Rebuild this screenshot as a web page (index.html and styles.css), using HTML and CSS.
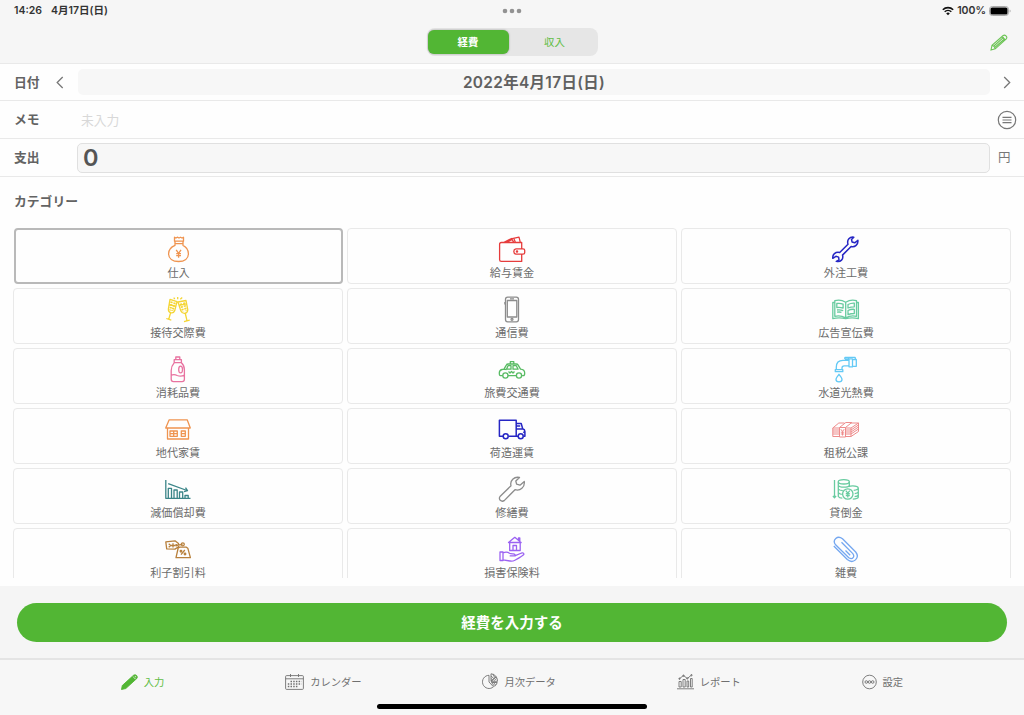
FILE: index.html
```
<!DOCTYPE html>
<html lang="ja">
  <head>
    <meta charset="UTF-8" />
    <title>経費</title>
    <link rel="stylesheet" href="styles.css">
  </head>
  <body>
    <header>
      <div class="status">
        <div class="status_left"><span>14:26</span><span>4月17日(日)</span></div>
        <svg class="dots" width="20" height="6" viewBox="0 0 20 6"><circle cx="3" cy="3" r="2.3"/><circle cx="10" cy="3" r="2.3"/><circle cx="17" cy="3" r="2.3"/></svg>
        <div class="status_right">
          <svg width="12" height="10" viewBox="0 0 12 10"><path d="M.8 3.8a7.4 7.4 0 0 1 10.4 0M2.7 5.8a4.7 4.7 0 0 1 6.6 0" fill="none" stroke="#111" stroke-width="1.6"/><path d="M4.2 7.4a2.6 2.6 0 0 1 3.6 0L6 9.3z" fill="#111"/></svg>
          <span>100%</span>
          <svg width="22" height="10" viewBox="0 0 22 10"><rect x=".5" y=".5" width="19" height="9" rx="2.8" fill="none" stroke="#aaa"/><rect x="1.5" y="1.5" width="17" height="7" rx="1.6"/><path d="M20.6 3.5v3q1-.4 1-1.5t-1-1.5" fill="#aaa"/></svg>
        </div>
      </div>
      <div class="toolbar">
        <div class="segment">
          <div class="seg active">経費</div>
          <div class="seg">収入</div>
        </div>
        <svg class="edit" width="18" height="17" viewBox="0 0 18 17"><path d="M1 16l1-4.700L13.200 1.500q1.300-1 2.800.4 1.500 1.600.3 2.900L5.300 14.800zM2 11.300q2.500.6 3.300 3.500M3.300 12.500L13.800 3.200M4.700 13.500L15 4.500M11.800 2.800l3.300 3.300"/></svg>
      </div>
    </header>

    <div class="row date_row">
      <div class="label">日付</div>
      <svg class="prev" width="8" height="13" viewBox="0 0 8 13"><path d="M6.700 1L1.200 6.500l5.500 5.500"/></svg>
      <div class="date">2022年4月17日(日)</div>
      <svg class="next" width="8" height="13" viewBox="0 0 8 13"><path d="M1.200 1l5.500 5.500L1.200 12"/></svg>
    </div>
    <div class="row memo_row">
      <div class="label">メモ</div>
      <div class="memo">未入力</div>
      <svg class="list" width="20" height="20" viewBox="0 0 20 20"><circle cx="10" cy="10" r="8.700"/><path d="M5.500 7.300h9M5.500 10h9M5.500 12.700h9"/></svg>
    </div>
    <div class="row amount_row">
      <div class="label">支出</div>
      <div class="amount">0</div>
      <div class="yen">円</div>
    </div>

    <main>
      <div class="label title">カテゴリー</div>
      <div class="grid">
        <div class="cell selected">
          <svg class="icon orange" viewBox="0 0 30 30"><path d="M10.500 2.200l1.500.8 1.300-.8 1.700.8 1.500-.8 1.500.8 1.500-.8v4h-9zM10.500 6.200h9M11 8.600h8.200M11 6.200v4.200C7 12 4.600 15.300 4.600 18.800c0 4.800 4 7.700 10 7.700s9.800-3 9.800-7.700c0-3.500-2.200-6.800-5.400-8.400V6.200M12.200 14.800l2.400 3.500 2.400-3.500M14.600 18.300v4.500M12.200 18.700H17M12.200 20.700H17"/></svg>
          <span>仕入</span>
        </div>
        <div class="cell">
          <svg class="icon red" viewBox="0 0 30 30"><path d="M24.700 13.800V7.500H4.300q-1.700 0-1.700 1.700v15.500q0 1.700 1.700 1.700h20.400v-7.300M18.800 13.900H26q1.700 0 1.700 1.300v2.600q0 1.300-1.700 1.300h-7.200q-2-.4-2-2.600t2-2.600M7 7.300l7.500-3.800 2.300 3.800M10 7l4.700-2.300M14 3.800l8-1.600 1.300 5.200M17 4l1.500 3.400"/><circle cx="20" cy="16.500" r=".6"/></svg>
          <span>給与賃金</span>
        </div>
        <div class="cell">
          <svg class="icon navy" viewBox="0 0 30 30"><path d="M22.800 2.200C18.800 1.500 15.600 5 17 9.200L8.700 17.500C4.500 16.500 1.300 19.500 1.800 23.300l3.100-2 2.700.8.400 2.700-2.700 1.500c4.300 1.300 7.500-2.400 6.200-6.200l8.600-8.600c3.800 1.200 7.300-2 6.800-6.200l-3.200 2.500-2.600-.8-.6-2.500z"/></svg>
          <span>外注工費</span>
        </div>

        <div class="cell">
          <svg class="icon yellow" viewBox="0 0 30 30"><path d="M7 4.300l7 2.300-2.300 9.200q-1.200 2.700-3.800 2-2.900-1.100-2.500-4zM7.600 17.800l-1.900 6.600M3.300 23.500l5 1.600M15 7l8-1.500 1.800 9.300q-.1 2.900-2.900 3.600-2.800.3-4-2.300zM22.300 18.500l1.700 7.200M21 26.600l5.700-1.400M6 9.300l6.700 2M16 10.300l7.500-1.500M14.700 4.300V2M11.800 4L10.700 2.700M17.300 4.300l1.900-1.800"/><path stroke-dasharray="1.700 1" stroke-width="2.200" d="M8.700 6.500l-1.500 9M11.700 7.500L9.500 16M17.800 8.500l2.300 8M21 7.500l2 8.500"/></svg>
          <span>接待交際費</span>
        </div>
        <div class="cell">
          <svg class="icon gray" viewBox="0 0 30 30"><rect x="8.500" y="2.200" width="13" height="24.600" rx="2.200"/><rect x="10.300" y="5.500" width="9.500" height="16.500"/><path d="M13 3.900h4M7.900 7v2.500"/><circle cx="15" cy="24.300" r="1"/></svg>
          <span>通信費</span>
        </div>
        <div class="cell">
          <svg class="icon mint" viewBox="0 0 30 30"><path d="M14.700 7.200Q9.500 4 3.800 5.700v15.600q5.500-1.500 10.900 1.500 5.200-3 10.800-1.500V5.700Q20 4 14.700 7.200zM14.700 7.200v16M3.800 7.500h-2v16.200q6-1.600 12.900 0 6.500-1.600 12.700 0V7.500h-2M5.800 8.500q3-.6 6.300.6v4q-3-1.200-6.300-.6zM6 15q3-.5 6.200.6M6 17.200q3-.5 4.500.2M17 9.500q3-1.600 6.300-1.400v3.700q-3.500 0-6.300 1.200zM17 15.500q3-1.500 6.300-1.200v4.200q-3.500 0-6.300 1.200z"/></svg>
          <span>広告宣伝費</span>
        </div>

        <div class="cell">
          <svg class="icon pink" viewBox="0 0 30 30"><path d="M12.800 4.700V2h4v2.700M11.200 7.700v-3h7.200v3zM11.300 7.700Q8.200 11.300 8.200 15.500v8.700q0 2.400 2.300 2.400h8.600q2.300 0 2.300-2.400v-9.500q0-4.200-3-7M8.200 20.200q3-1.300 6 .3 3.500 1.400 7.200-.3"/><ellipse cx="17.600" cy="14.500" rx="1.900" ry="3.400"/></svg>
          <span>消耗品費</span>
        </div>
        <div class="cell">
          <svg class="icon green" viewBox="0 0 30 30"><path d="M5.800 20.700H3.400Q2.300 20.700 2.300 18q0-2.800 2.700-3.500l2-.4 2.300-4Q9.800 9 11.300 9h7.900q1.300 0 2 1.100l2.300 4q4.200.4 4.200 3.900 0 2.700-1.300 2.700h-1.300M11 20.700h8.500M13.300 8.800V6.700h3.500v2.100M7 14.200l2.500.5M11 10.700h3v3.500H9.500zM16 10.700h3.300l1.800 3.500H16zM11.500 16.500l1.500 1.500 1.500-1.500 1.500 1.500 1.500-1.500"/><circle cx="8.400" cy="20.500" r="2.600"/><circle cx="22" cy="20.500" r="2.600"/></svg>
          <span>旅費交通費</span>
        </div>
        <div class="cell">
          <svg class="icon sky" viewBox="0 0 30 30"><path d="M5.300 14.700V12q0-6.700 6.700-6.700h6v5.500h-4.800q-2.200 0-2.200 2.200v1.700M4.300 14.700h7.500v2H4.300zM18 3.800h3.500v8H18zM21.500 4.500h3.800v6.800h-3.800zM13.800 2.300h10.500M13.800 4h4M13.800 2.300V4M24.300 2.300v2.200M17.500 2.300v1.500M8 19.300q-3 3.500-3 5.300 0 2.200 3 2.200t3-2.200q0-1.800-3-5.300z"/></svg>
          <span>水道光熱費</span>
        </div>

        <div class="cell">
          <svg class="icon orange" viewBox="0 0 30 30"><path d="M6.200 4.800h18L27.300 13H2.700zM4.500 13v11h21V13M7 16h7.300v5.300H7zM10.700 16v5.300M7 18.700h7.300M18.300 16h4v5.300h-4zM18.300 18.700h4"/></svg>
          <span>地代家賃</span>
        </div>
        <div class="cell">
          <svg class="icon navy" viewBox="0 0 30 30"><path d="M6 21.300H2.400V5.300h16.800v16h-7.500M19.200 8.500h5l1.500 5.300q2.200.7 2.200 2.800v4.700h-1.500M19.200 21.300h1.800M19.200 11h4M19.200 14h6.500M26.200 17.300h1.700"/><circle cx="8.700" cy="21.300" r="2.500"/><circle cx="23.700" cy="21.300" r="2.500"/></svg>
          <span>荷造運賃</span>
        </div>
        <div class="cell">
          <svg class="icon salmon" viewBox="0 0 30 30"><path d="M1.800 13h6.700v8.500H1.800zM8.500 12.500h6v9.500h-6zM14.500 13H20v8.500h-5.500M1.800 13l6-5h5.700M8.500 12.500l6.300-5h6l-6.300 5M20 13l7.500-5h-7.500M27.500 8v8.500l-7.500 5M1.800 15h6.500M1.800 17h6.500M1.800 19h6.500M14.500 15H20l7.500-5M14.500 17H20l7.500-5M14.500 19H20l7.500-5M9.800 14.200l1.700 2.300 1.700-2.300M11.500 16.500v4M9.800 17.200h3.400M9.800 19h3.400"/></svg>
          <span>租税公課</span>
        </div>

        <div class="cell">
          <svg class="icon teal" viewBox="0 0 30 30"><path d="M2.800 5v18.300h24.700M5.200 8.700L24 15.500M22.500 12.700l2 3-3.500 1M5.300 23V13.300h3.200V23M11 23v-8h3.200v8M16.500 23v-6h3.200v6M22 23v-2.500h3.200V23"/></svg>
          <span>減価償却費</span>
        </div>
        <div class="cell">
          <svg class="icon gray" viewBox="0 0 30 30"><path d="M22.500 2.500C17.200 1.300 12.600 5.500 14 10.800L3 21.500q-1.300 2 .2 3.800 2 1.700 4 .3L18 14.700c5.300 1.700 10-2.600 9.300-8.200l-4.300 3.700-3.400-1-.8-3.200z"/></svg>
          <span>修繕費</span>
        </div>
        <div class="cell">
          <svg class="icon mint" viewBox="0 0 30 30"><path d="M3.500 5v17.500M1.900 20.800l1.600 2 1.600-2M7.300 6.800v14.700q1 1.600 4 1.600M18.300 6.800v5M7.300 10.500q1 1.700 5.500 1.700t5.300-1.500M7.300 14q1 1.500 4.500 1.600M7.300 17.700q1 1.500 3.500 1.600M27.300 13.200v9q-.7 1.700-5.500 1.900M17.500 11.800q1.500-1 4.300-1 5.200 0 5.500 2.300 0 2-4.600 2.200M23.700 18.600q3-.2 3.600-1.500M23.600 21.700q3-.3 3.700-1.600M14.800 15.700l2 2.500 2-2.500M16.800 18.200v4.200M14.800 18.700h4M14.800 20.500h4"/><ellipse cx="12.800" cy="6.800" rx="5.500" ry="2.200"/><circle cx="16.800" cy="19" r="5.200"/></svg>
          <span>貸倒金</span>
        </div>

        <div class="cell">
          <svg class="icon brown" viewBox="0 0 30 30"><path d="M2.800 6.800l9.200-1 3.500 2.700v3.300l-3.500 2.300-8.300-.2zM13 22.700L15.200 13l1.700-.8h6.500l1.400 1 2.600 9.500zM14 10.300l5.500-1M5.700 8.800l2 1.700-2 1.700M10 8.300v4.200M8 10.500h4M18 19.700l3.800-4.700"/><circle cx="13.300" cy="10.300" r=".6"/><circle cx="18" cy="16.200" r=".8"/><circle cx="22" cy="19" r=".8"/><circle cx="19.800" cy="9.300" r="1.500"/></svg>
          <span>利子割引料</span>
        </div>
        <div class="cell">
          <svg class="icon purple" viewBox="0 0 30 30"><path d="M11.500 7.500l6.300-5.200 6.300 5.200zM12.700 7.500v8h10.500v-8M16 15.500v-5h3.500v5M21.500 5V3h1.300v3.500M3 17h3v8.500H3zM6 17.800q4-1.500 6.500.5 1 .7 3.700.6 2.300.2 2 2h-5.500M18.200 20.700l6.500-2.700q2-.5 2.200 1.200-.5 1.300-9 6-2.300 1.300-5 .8L6 24.800"/></svg>
          <span>損害保険料</span>
        </div>
        <div class="cell">
          <svg class="icon blue" viewBox="0 0 30 30"><path d="M2.800 11l13.500 13.500c6 5 13-1.500 8.400-7.500L11.500 3.800C6.500-.2.800 5 4.600 9.800l13.200 13c4 2.300 6.200-1.200 4-4.200L10.500 7.300M14.500 15.500l4.700 4.700"/></svg>
          <span>雑費</span>
        </div>
      </div>
    </main>

    <div class="submit_area">
      <div class="submit">経費を入力する</div>
    </div>

    <footer>
      <nav>
        <div class="tab active">
          <svg width="17" height="16" viewBox="0 0 17 16"><path d="M.5 15.500l.8-4L12.500 1.300q1.700-1.200 3.100.2 1.400 1.500.2 3L4.800 14.500z" fill="#52b634"/><path d="M12.200 2.600l2.300 2.500" stroke="#f6f6f6"/><circle cx="14.300" cy="2.700" r="1" fill="#f6f6f6"/></svg>
          <span>入力</span>
        </div>
        <div class="tab">
          <svg width="19" height="16" viewBox="0 0 19 16"><rect x=".6" y="1.600" width="17.800" height="13.800" rx="1"/><path d="M.6 4.800h17.800M5.500 0v3M13.500 0v3"/><path d="M5.500 7.400h11M2.800 9.900h13.700M2.800 12.400h10.500" stroke-width="1.500" stroke-dasharray="1.500 1.200"/></svg>
          <span>カレンダー</span>
        </div>
        <div class="tab">
          <svg width="16" height="17" viewBox="0 0 16 17"><path d="M7 2.300a6.600 6.600 0 1 0 4.500 11.500L7 9zM9 .8v7.500l5.200-4.600Q12 .8 9 .8zM14.200 3.700L9 8.300h6.500q0-2.700-1.300-4.600M9.500 9.500l3 3.700q2.300-1.300 2.700-3.700zM9 3l2.800 2.500M9 5.500l1.500 1.300M11 1.200l1.700 3.300M12 7.800l2.500-2.500M11.500 9.500l2 2.500"/></svg>
          <span>月次データ</span>
        </div>
        <div class="tab">
          <svg width="17" height="16" viewBox="0 0 17 16"><path d="M0 14.800h17M2 13V7.500h2.200V13zM6 13V5.500h2.200V13zM10 13V7h1.700v6zM13.500 13V4.500h1.700V13zM2 5l4.500-3.500 3.800 3L14.700.9"/><circle cx="2.500" cy="4.700" r=".7"/><circle cx="6.500" cy="1.700" r=".7"/><circle cx="10.300" cy="4.400" r=".7"/><circle cx="14.500" cy="1.200" r=".7"/></svg>
          <span>レポート</span>
        </div>
        <div class="tab">
          <svg width="15" height="16" viewBox="0 0 15 16"><circle cx="7.500" cy="8" r="6.800"/><circle cx="4.300" cy="8" r="1.300"/><circle cx="7.500" cy="8" r="1.300"/><circle cx="10.700" cy="8" r="1.300"/></svg>
          <span>設定</span>
        </div>
      </nav>
      <div class="home_bar"></div>
    </footer>
  </body>
</html>
```
FILE: styles.css
```
* { box-sizing: border-box; }
body {
    margin: 0;
    height: 715px;
    display: flex;
    flex-direction: column;
    overflow: hidden;
    background: #fefefe;
    color: #555;
    font-family: "Inter", "Noto Sans CJK JP", sans-serif;
}
svg { display: block; flex: none; fill: none; }

header {
    height: 64px;
    background: #f6f6f6;
    border-bottom: 1px solid #e9e9e9;
}
.status {
    height: 21px;
    padding: 0 13px 0 14px;
    display: grid;
    grid-template-columns: 1fr auto 1fr;
    align-items: center;
    font-size: 10.5px;
    font-weight: 600;
    line-height: 21px;
    color: #333;
}
.status_left { display: flex; gap: 9px; }
.status_right {
    display: flex;
    justify-content: flex-end;
    align-items: center;
    gap: 3px;
}
.status_right rect:nth-child(2) { fill: #000; }
.dots { fill: #929292; margin-left: -1px; }
.toolbar {
    height: 42px;
    padding: 0 16px 0 33px;
    display: grid;
    grid-template-columns: 1fr auto 1fr;
    align-items: center;
}
.segment {
    grid-column: 2;
    display: flex;
    width: 171px;
    height: 28px;
    padding: 2px 1px;
    border-radius: 8px;
    background: #e6e6e6;
    margin-left: -17px;
}
.seg {
    flex: 1;
    line-height: 25px;
    font-size: 10.4px;
    text-align: center;
    color: #62bd46;
}
.seg.active {
    flex: 0 0 81px;
    margin-right: 4px;
    border-radius: 6px;
    background: #52b634;
    color: #fff;
    font-weight: 600;
    box-shadow: 0 0 2px rgba(0, 0, 0, 0.35);
}
.edit {
    justify-self: end;
    stroke: #6cc455;
    stroke-width: 1.1;
}

.row {
    display: flex;
    align-items: center;
    border-bottom: 1px solid #e9e9e9;
    padding-left: 14px;
}
.label {
    width: 63px;
    font-size: 12.8px;
    font-weight: 600;
    line-height: 18px;
    padding-top: 1px;
    color: #636363;
}
.date_row { height: 37px; }
.date_row .label { width: 42px; }
.prev, .next { stroke: #777; stroke-width: 1.3; }
.date {
    flex: 1;
    height: 26px;
    margin: 0 13px 0 14px;
    border-radius: 5px;
    background: #f7f7f7;
    font-size: 15.4px;
    font-weight: 600;
    letter-spacing: 0.35px;
    line-height: 28px;
    text-align: center;
    color: #606060;
}
.next { margin-right: 13px; }
.memo_row { height: 38px; padding-right: 7px; }
.memo {
    flex: 1;
    padding-left: 4px;
    font-size: 12.8px;
    color: #d8d8d8;
}
.list { stroke: #777; stroke-width: 1.2; }
.amount_row { height: 38px; }
.amount {
    flex: 1;
    height: 30px;
    padding-left: 5px;
    border: 1px solid #e0e0e0;
    border-radius: 5px;
    background: #f7f7f7;
    font-size: 23.5px;
    font-weight: 600;
    line-height: 28px;
}
.yen {
    width: 34px;
    padding: 1px 0 0 8px;
    font-size: 12.5px;
    line-height: 18px;
    color: #777;
}

main { height: 409px; }
.title {
    width: auto;
    height: 51px;
    padding-left: 14px;
    line-height: 48px;
}
.grid {
    height: 350px;
    padding: 0 13px;
    display: grid;
    grid-template-columns: repeat(3, 1fr);
    grid-auto-rows: 56px;
    gap: 4px;
    overflow: hidden;
}
.cell {
    display: flex;
    flex-direction: column;
    align-items: center;
    padding-top: 6px;
    border: 1px solid #e9e9e9;
    border-radius: 4px;
    font-size: 11.1px;
    line-height: 10px;
    color: #6c6c6c;
}
.cell span { margin-top: 3px; }
.cell.selected {
    margin-left: 1px;
    padding-top: 5px;
    border: 2px solid #b9b9b9;
}
.icon {
    width: 30px;
    height: 30px;
    stroke: currentColor;
    stroke-width: 1.3;
    stroke-linejoin: round;
}
.orange { color: #ef9450; }
.red { color: #e63c3c; }
.navy { color: #2626c4; stroke-width: 1.5; }
.yellow { color: #f4d534; }
.gray { color: #8c8c8c; }
.mint { color: #68cba0; }
.pink { color: #e873a0; }
.green { color: #58bb63; }
.sky { color: #63c9f5; }
.salmon { color: #ee8b8b; stroke-width: 1; }
.teal { color: #3b8588; }
.brown { color: #b8803c; }
.purple { color: #9b62f2; }
.blue { color: #74a7f0; }

.submit_area {
    height: 72px;
    padding: 17px 17px 0;
    background: #f5f5f5;
}
.submit {
    height: 39px;
    border-radius: 20px;
    background: #52b634;
    color: #fff;
    font-size: 14.5px;
    font-weight: 600;
    line-height: 40px;
    text-align: center;
}

footer {
    flex: 1;
    border-top: 2px solid #e4e4e4;
    background: #f7f7f7;
}
nav {
    height: 43px;
    display: flex;
    justify-content: space-evenly;
    align-items: center;
}
.tab {
    display: flex;
    align-items: center;
    gap: 6px;
    font-size: 10.3px;
    line-height: 16px;
    color: #707070;
}
.tab svg { stroke: #707070; stroke-width: 0.9; }
.tab.active { color: #62bd46; }
.tab.active svg { stroke: #52b634; }
.home_bar {
    width: 270px;
    height: 5px;
    margin: 1px auto 0;
    border-radius: 3px;
    background: #000;
}
```
